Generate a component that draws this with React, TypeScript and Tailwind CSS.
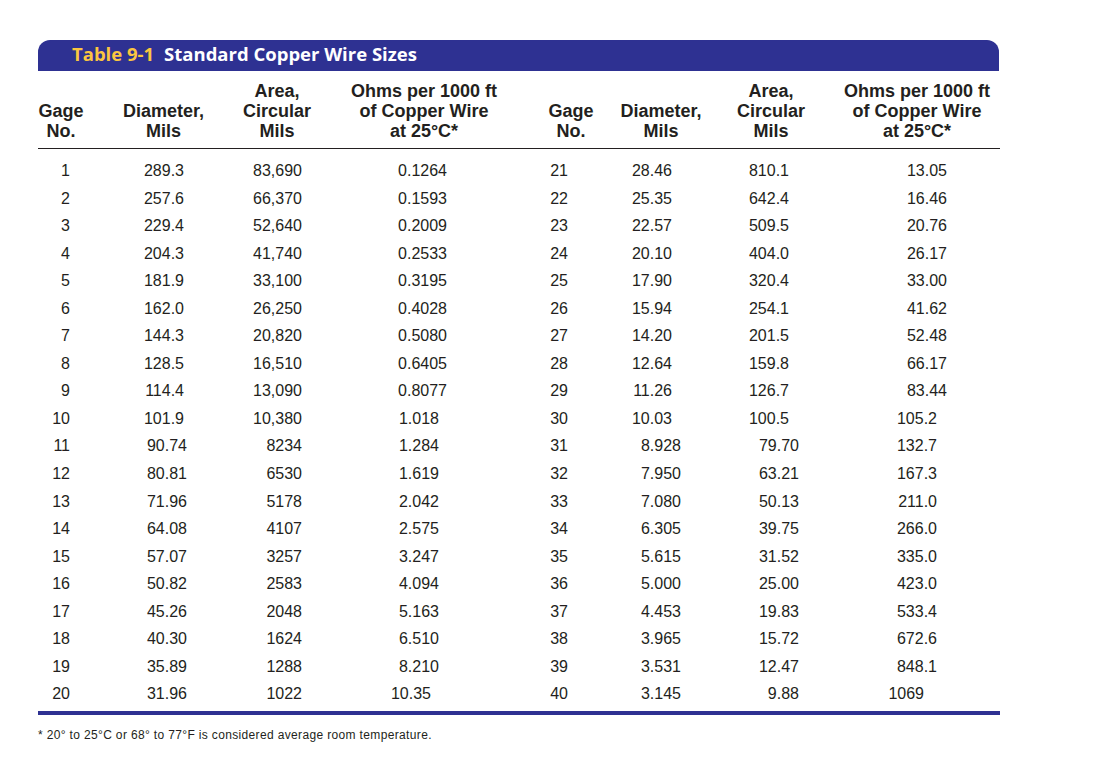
import React from "react";

const leftRows: string[][] = [
  ["1", "289.3", "83,690", "0.1264"],
  ["2", "257.6", "66,370", "0.1593"],
  ["3", "229.4", "52,640", "0.2009"],
  ["4", "204.3", "41,740", "0.2533"],
  ["5", "181.9", "33,100", "0.3195"],
  ["6", "162.0", "26,250", "0.4028"],
  ["7", "144.3", "20,820", "0.5080"],
  ["8", "128.5", "16,510", "0.6405"],
  ["9", "114.4", "13,090", "0.8077"],
  ["10", "101.9", "10,380", "1.018"],
  ["11", "90.74", "8234", "1.284"],
  ["12", "80.81", "6530", "1.619"],
  ["13", "71.96", "5178", "2.042"],
  ["14", "64.08", "4107", "2.575"],
  ["15", "57.07", "3257", "3.247"],
  ["16", "50.82", "2583", "4.094"],
  ["17", "45.26", "2048", "5.163"],
  ["18", "40.30", "1624", "6.510"],
  ["19", "35.89", "1288", "8.210"],
  ["20", "31.96", "1022", "10.35"],
];

const rightRows: string[][] = [
  ["21", "28.46", "810.1", "13.05"],
  ["22", "25.35", "642.4", "16.46"],
  ["23", "22.57", "509.5", "20.76"],
  ["24", "20.10", "404.0", "26.17"],
  ["25", "17.90", "320.4", "33.00"],
  ["26", "15.94", "254.1", "41.62"],
  ["27", "14.20", "201.5", "52.48"],
  ["28", "12.64", "159.8", "66.17"],
  ["29", "11.26", "126.7", "83.44"],
  ["30", "10.03", "100.5", "105.2"],
  ["31", "8.928", "79.70", "132.7"],
  ["32", "7.950", "63.21", "167.3"],
  ["33", "7.080", "50.13", "211.0"],
  ["34", "6.305", "39.75", "266.0"],
  ["35", "5.615", "31.52", "335.0"],
  ["36", "5.000", "25.00", "423.0"],
  ["37", "4.453", "19.83", "533.4"],
  ["38", "3.965", "15.72", "672.6"],
  ["39", "3.531", "12.47", "848.1"],
  ["40", "3.145", "9.88", "1069"],
];

const gridCols =
  "grid grid-cols-[46px_159px_68px_226px_68px_112px_108px_175px]";

function HeaderCell({ lines, extra = "" }: { lines: string[]; extra?: string }) {
  return (
    <div className={`flex flex-col items-center justify-end text-center ${extra}`}>
      {lines.map((l) => (
        <div key={l} className="whitespace-nowrap">
          {l}
        </div>
      ))}
    </div>
  );
}

export default function App() {
  return (
    <div
      className="min-h-screen bg-white pl-[38px] pt-[40px] text-[#231f20]"
      style={{ fontFamily: '"Liberation Sans", Arial, sans-serif' }}
    >
      <div className="w-[962px]">
        {/* Title bar */}
        <div className="flex h-[31px] w-[961px] items-center rounded-t-[12px] bg-[#2e3192] pb-[2px] pl-[34px]">
          <span
            className="text-[18.5px] font-bold leading-none text-[#fbc640]"
            style={{ fontFamily: '"Open Sans", "Liberation Sans", sans-serif' }}
          >
            Table 9-1
          </span>
          <span
            className="ml-[10px] text-[18.5px] font-bold leading-none text-white"
            style={{ fontFamily: '"Open Sans", "Liberation Sans", sans-serif' }}
          >
            Standard Copper Wire Sizes
          </span>
        </div>

        {/* Column headers */}
        <div className={`${gridCols} pt-[10px] pb-[7px] text-[18px] font-bold leading-[20px]`}>
          <HeaderCell lines={["Gage", "No."]} />
          <HeaderCell lines={["Diameter,", "Mils"]} />
          <HeaderCell lines={["Area,", "Circular", "Mils"]} />
          <HeaderCell lines={["Ohms per 1000 ft", "of Copper Wire", "at 25°C*"]} />
          <HeaderCell lines={["Gage", "No."]} />
          <HeaderCell lines={["Diameter,", "Mils"]} />
          <HeaderCell lines={["Area,", "Circular", "Mils"]} />
          <HeaderCell lines={["Ohms per 1000 ft", "of Copper Wire", "at 25°C*"]} extra="pl-[9px]" />
        </div>
        <div className="h-px w-[962px] bg-[#231f20]" />

        {/* Data rows */}
        <div className="mt-[8px] text-[16px]">
          {leftRows.map((l, i) => {
            const r = rightRows[i];
            const lDiam = i < 10 ? "pr-[59px]" : "pr-[56px]";
            const lOhm = i < 9 ? "pr-[90px]" : i < 19 ? "pr-[98px]" : "pr-[106px]";
            const rDiam = i < 10 ? "pr-[45px]" : "pr-[36px]";
            const rArea = i < 10 ? "pr-[36px]" : "pr-[26px]";
            const rOhm = i < 9 ? "pr-[53px]" : i < 19 ? "pr-[63px]" : "pr-[76px]";
            return (
              <div key={l[0]} className={`${gridCols} h-[27.55px] items-center leading-[27.55px]`}>
                <div className="pr-[14px] text-right">{l[0]}</div>
                <div className={`text-right ${lDiam}`}>{l[1]}</div>
                <div className="pr-[9px] text-right">{l[2]}</div>
                <div className={`text-right ${lOhm}`}>{l[3]}</div>
                <div className="pr-[37px] text-right">{r[0]}</div>
                <div className={`text-right ${rDiam}`}>{r[1]}</div>
                <div className={`text-right ${rArea}`}>{r[2]}</div>
                <div className={`text-right ${rOhm}`}>{r[3]}</div>
              </div>
            );
          })}
        </div>

        <div className="mt-[3px] h-[4px] w-[962px] bg-[#2e3192]" />

        <div className="mt-[12px] text-[12px] leading-[16px] tracking-[0.35px]">
          * 20° to 25°C or 68° to 77°F is considered average room temperature.
        </div>
      </div>
    </div>
  );
}
